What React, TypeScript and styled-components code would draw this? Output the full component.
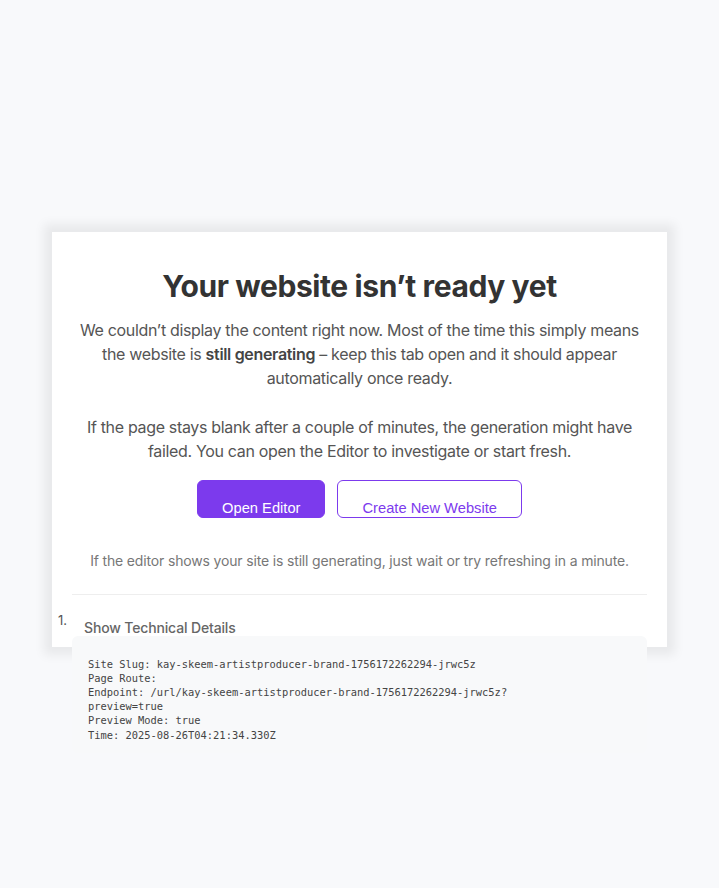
import { createGlobalStyle, styled } from "styled-components";

const GlobalStyle = createGlobalStyle`
  html, body {
    margin: 0;
    padding: 0;
    background: #f8f9fb;
  }
  body {
    font-family: Inter, "Noto Sans", "Liberation Sans", sans-serif;
    color: #333;
  }
`;

const Page = styled.main`
  min-height: 100vh;
  display: flex;
  align-items: center;
  justify-content: center;
  box-sizing: border-box;
  padding-bottom: 10px;
`;

const Card = styled.section`
  width: 615px;
  height: 415px;
  box-sizing: border-box;
  padding: 36px 20px 0;
  background: #fff;
  box-shadow: 0 0 10px 8px rgba(0, 0, 0, 0.065);
  text-align: center;
`;

const Title = styled.h1`
  margin: 0 0 14px;
  font-size: 30px;
  line-height: 36px;
  font-weight: 700;
  letter-spacing: -0.4px;
  color: #333;
`;

const Copy = styled.div`
  display: flex;
  flex-direction: column;
  gap: 25px;
  margin-bottom: 17px;
`;

const Lead = styled.p`
  margin: 0;
  font-size: 16px;
  line-height: 24px;
  letter-spacing: -0.33px;
  color: #555;

  strong {
    font-weight: 600;
    color: #444;
  }
`;

const Actions = styled.div`
  display: flex;
  justify-content: center;
  gap: 12px;
`;

const Button = styled.button<{ $variant?: "primary" | "outline" }>`
  height: 38px;
  box-sizing: border-box;
  padding: 19px 24px 1px;
  border-radius: 6px;
  border: 1px solid #7c3aed;
  font-family: "Liberation Sans", Arial, sans-serif;
  font-size: 14.7px;
  line-height: 17px;
  cursor: pointer;
  background: ${(p) => (p.$variant === "outline" ? "#fff" : "#7c3aed")};
  color: ${(p) => (p.$variant === "outline" ? "#7c3aed" : "#fff")};
`;

const Note = styled.p`
  margin: 34px 0 25px;
  font-size: 14px;
  line-height: 17px;
  letter-spacing: -0.16px;
  color: #777;
`;

const Divider = styled.hr`
  margin: 0;
  border: none;
  border-top: 1px solid #eee;
`;

const DetailsList = styled.ol`
  margin: 16px 0 0;
  padding: 0;
  list-style: none;
  counter-reset: item;
  text-align: left;
`;

const DetailsItem = styled.li`
  counter-increment: item;

  &::before {
    content: counter(item) ".";
    float: left;
    margin-left: -14px;
    font-size: 13px;
    line-height: 19px;
    color: #555;
  }
`;

const Details = styled.details`
  display: block;
`;

const Summary = styled.summary`
  display: block;
  list-style: none;
  padding: 8px 12px 0;
  font-size: 14px;
  line-height: 17px;
  font-weight: 500;
  letter-spacing: -0.15px;
  color: #666;
  cursor: pointer;

  &::-webkit-details-marker {
    display: none;
  }
`;

const Pre = styled.pre`
  margin: 0;
  padding: 21px 16px 11px;
  background: #f8f9fa;
  border-radius: 6px;
  font-family: "DejaVu Sans Mono", "Liberation Mono", monospace;
  font-size: 10.4px;
  line-height: 14.2px;
  color: #444;
  white-space: pre-wrap;
`;

const slug = "kay-skeem-artistproducer-brand-1756172262294-jrwc5z";

const details = [
  `Site Slug: ${slug}`,
  "Page Route: ",
  `Endpoint: /url/${slug}?`,
  "preview=true",
  "Preview Mode: true",
  "Time: 2025-08-26T04:21:34.330Z",
].join("\n");

export default function App() {
  return (
    <>
      <GlobalStyle />
      <Page>
        <Card>
          <Title>Your website isn’t ready yet</Title>
          <Copy>
            <Lead>
              We couldn’t display the content right now. Most of the time this simply means the website is{" "}
              <strong>still generating</strong> – keep this tab open and it should appear automatically once ready.
            </Lead>
            <Lead>
              If the page stays blank after a couple of minutes, the generation might have failed. You can open the
              Editor to investigate or start fresh.
            </Lead>
          </Copy>
          <Actions>
            <Button>Open Editor</Button>
            <Button $variant="outline">Create New Website</Button>
          </Actions>
          <Note>If the editor shows your site is still generating, just wait or try refreshing in a minute.</Note>
          <Divider />
          <DetailsList>
            <DetailsItem>
              <Details open>
                <Summary>Show Technical Details</Summary>
                <Pre>{details}</Pre>
              </Details>
            </DetailsItem>
          </DetailsList>
        </Card>
      </Page>
    </>
  );
}
